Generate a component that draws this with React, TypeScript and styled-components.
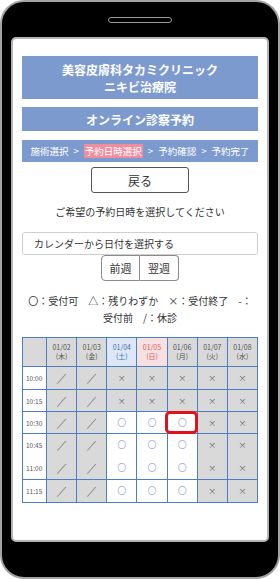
import React from "react";
import styled, { createGlobalStyle, css } from "styled-components";

const Global = createGlobalStyle`
  html, body { margin: 0; padding: 0; background: #fff; }
  body { font-family: "Noto Sans CJK JP", "Noto Sans", sans-serif; }
  * { box-sizing: border-box; }
`;

const Phone = styled.div`
  width: 280px;
  height: 579px;
  background: #000;
  border: 2px solid #a3a3a3;
  border-radius: 24px;
  padding: 15px 9px 35px;
  display: flex;
  flex-direction: column;
`;

const Speaker = styled.div`
  align-self: center;
  width: 64px;
  height: 6px;
  border: 1.5px solid #9a9a9a;
  border-radius: 4px;
  margin-bottom: 14px;
`;

const Screen = styled.div`
  flex: 1;
  background: #fff;
  border: 2px solid #b3b3b3;
  border-radius: 5px;
  padding: 17px 9px 0;
  display: flex;
  flex-direction: column;
  overflow: hidden;
`;

const BlueBar = styled.div<{ $h: number; $mt: number }>`
  height: ${(p) => p.$h}px;
  margin-top: ${(p) => p.$mt}px;
  background: #7d9acf;
  color: #fff;
  display: flex;
  flex-direction: column;
  align-items: center;
  justify-content: center;
`;

const TitleText = styled.div`
  font-size: 12px;
  font-weight: 700;
  line-height: 17px;
  text-align: center;
`;

const Crumbs = styled.div`
  display: flex;
  align-items: center;
  font-size: 9.5px;
  line-height: 14px;
  white-space: nowrap;
  color: #fff;
`;

const Sep = styled.span`
  margin: 0 5px;
`;

const Current = styled.span`
  background: #f08ea0;
  padding: 0 1px;
`;

const BackButton = styled.button`
  display: block;
  margin: 5px auto 0;
  width: 98px;
  height: 26px;
  border: 1px solid #555;
  border-radius: 3px;
  background: #fff;
  font-family: inherit;
  font-size: 12px;
  color: #333;
  padding: 0;
`;

const Prompt = styled.p`
  margin: 11px 0 0;
  font-size: 10px;
  line-height: 16px;
  text-align: center;
  color: #333;
`;

const DateInput = styled.div`
  margin-top: 12px;
  height: 23px;
  border: 1px solid #cfcfcf;
  border-radius: 3px;
  padding-left: 11px;
  display: flex;
  align-items: center;
  font-size: 10px;
  color: #333;
`;

const WeekGroup = styled.div`
  display: flex;
  justify-content: center;
`;

const WeekButton = styled.button<{ $side: "l" | "r" }>`
  width: 39px;
  height: 26px;
  background: #fff;
  border: 1px solid #8a8a8a;
  font-family: inherit;
  font-size: 11px;
  color: #333;
  padding: 0;
  ${(p) =>
    p.$side === "l"
      ? css`border-radius: 4px 0 0 4px;`
      : css`border-radius: 0 4px 4px 0; border-left: none;`}
`;

const Legend = styled.p`
  margin: 11px 0 0;
  font-size: 10px;
  line-height: 17px;
  text-align: center;
  color: #333;
  white-space: pre;
`;

const Grid = styled.table`
  margin-top: 11px;
  width: 236px;
  border-collapse: collapse;
  table-layout: fixed;
  border: 1px solid #a9bfdc;
`;

type Tone = "gray" | "white" | "sat" | "sun";

const toneBg: Record<Tone, string> = {
  gray: "#d9d9d9",
  white: "#fff",
  sat: "#dde7f5",
  sun: "#f6e0e1",
};

const HeadCell = styled.th<{ $tone: Tone }>`
  height: 29px;
  padding: 0;
  background: ${(p) => toneBg[p.$tone]};
  border: 1px solid #4a80c3;
  font-weight: 400;
  font-size: 7px;
  line-height: 9px;
  color: ${(p) => (p.$tone === "sat" ? "#3e6fb8" : p.$tone === "sun" ? "#e0585e" : "#555")};
`;

const TimeCell = styled.td<{ $h: number; $open?: boolean }>`
  height: ${(p) => p.$h}px;
  padding: 0 0 0 3px;
  background: #fff;
  border: 1px solid #4a80c3;
  ${(p) => p.$open && css`border-bottom-style: hidden;`}
  font-size: 6.5px;
  color: #555;
`;

const Cell = styled.td<{ $kind: string; $open?: boolean; $picked?: boolean }>`
  position: relative;
  padding: 0;
  text-align: center;
  background: ${(p) => (p.$kind === "o" ? "#fff" : "#d9d9d9")};
  border: 1px solid #4a80c3;
  ${(p) => p.$open && css`border-bottom-style: hidden;`}
  color: ${(p) => (p.$kind === "o" ? "#9fb3cf" : p.$kind === "x" ? "#666" : "#555")};
  font-size: ${(p) => (p.$kind === "o" ? "9px" : p.$kind === "x" ? "8px" : "10px")};
  line-height: 10px;
  ${(p) =>
    p.$picked &&
    css`
      &::after {
        content: "";
        position: absolute;
        left: -3px;
        right: -1px;
        top: -1px;
        bottom: -1px;
        border: 3px solid #e1121c;
        border-radius: 5px;
      }
    `}
`;

const Slash = styled.span`
  display: inline-block;
  transform: skewX(-30deg);
`;

const days: { d: string; w: string; tone: Tone }[] = [
  { d: "01/02", w: "(木)", tone: "gray" },
  { d: "01/03", w: "(金)", tone: "gray" },
  { d: "01/04", w: "(土)", tone: "sat" },
  { d: "01/05", w: "(日)", tone: "sun" },
  { d: "01/06", w: "(月)", tone: "gray" },
  { d: "01/07", w: "(火)", tone: "gray" },
  { d: "01/08", w: "(水)", tone: "gray" },
];

const rows: { t: string; h: number; cells: string[]; open?: boolean }[] = [
  { t: "10:00", h: 23, cells: ["/", "/", "x", "x", "x", "x", "x"] },
  { t: "10:15", h: 22, cells: ["/", "/", "x", "x", "x", "x", "x"] },
  { t: "10:30", h: 22, cells: ["/", "/", "o", "o", "o", "x", "x"] },
  { t: "10:45", h: 23, cells: ["/", "/", "o", "o", "o", "x", "x"], open: true },
  { t: "11:00", h: 23, cells: ["/", "/", "o", "o", "o", "x", "x"] },
  { t: "11:15", h: 23, cells: ["/", "/", "o", "o", "o", "x", "x"] },
];

function Mark({ kind }: { kind: string }) {
  if (kind === "/") return <Slash>/</Slash>;
  return <>{kind === "x" ? "×" : "〇"}</>;
}

export default function App() {
  return (
    <>
      <Global />
      <Phone>
        <Speaker />
        <Screen>
          <BlueBar $h={43} $mt={0}>
            <TitleText>美容皮膚科タカミクリニック</TitleText>
            <TitleText>ニキビ治療院</TitleText>
          </BlueBar>
          <BlueBar $h={24} $mt={8}>
            <TitleText>オンライン診察予約</TitleText>
          </BlueBar>
          <BlueBar $h={22} $mt={9}>
            <Crumbs>
              施術選択<Sep>&gt;</Sep>
              <Current>予約日時選択</Current>
              <Sep>&gt;</Sep>予約確認<Sep>&gt;</Sep>予約完了
            </Crumbs>
          </BlueBar>
          <BackButton>戻る</BackButton>
          <Prompt>ご希望の予約日時を選択してください</Prompt>
          <DateInput>カレンダーから日付を選択する</DateInput>
          <WeekGroup>
            <WeekButton $side="l">前週</WeekButton>
            <WeekButton $side="r">翌週</WeekButton>
          </WeekGroup>
          <Legend>
            {"〇：受付可　△：残りわずか　×：受付終了　-："}
            <br />
            {"受付前　/：休診"}
          </Legend>
          <Grid>
            <colgroup>
              <col style={{ width: 24 }} />
              {days.map((d) => (
                <col key={d.d} />
              ))}
            </colgroup>
            <thead>
              <tr>
                <HeadCell $tone="gray" />
                {days.map((d) => (
                  <HeadCell key={d.d} $tone={d.tone}>
                    {d.d}
                    <br />
                    {d.w}
                  </HeadCell>
                ))}
              </tr>
            </thead>
            <tbody>
              {rows.map((r) => (
                <tr key={r.t}>
                  <TimeCell $h={r.h} $open={r.open}>
                    {r.t}
                  </TimeCell>
                  {r.cells.map((c, i) => (
                    <Cell key={i} $kind={c} $open={r.open} $picked={r.t === "10:30" && i === 4}>
                      <Mark kind={c} />
                    </Cell>
                  ))}
                </tr>
              ))}
            </tbody>
          </Grid>
        </Screen>
      </Phone>
    </>
  );
}
